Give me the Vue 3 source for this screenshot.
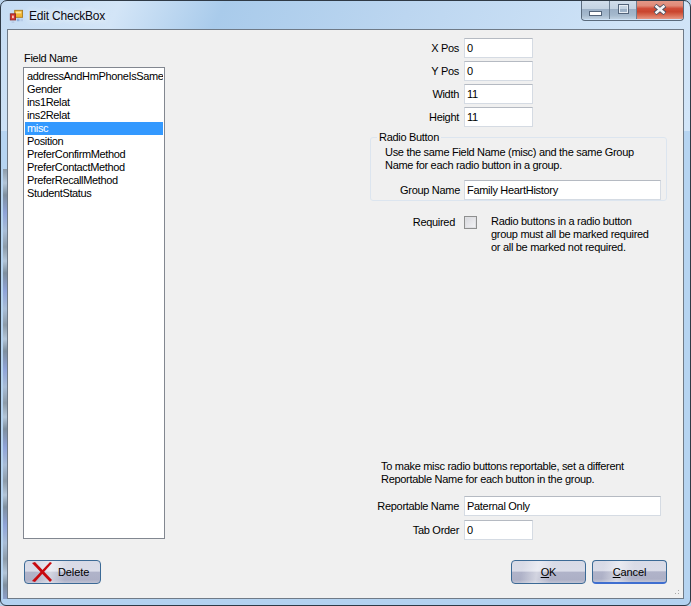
<script setup>
const fields = ['addressAndHmPhoneIsSame','Gender','ins1Relat','ins2Relat','misc','Position','PreferConfirmMethod','PreferContactMethod','PreferRecallMethod','StudentStatus']
const selected = 'misc'
const posRows = [['X Pos','0'],['Y Pos','0'],['Width','11'],['Height','11']]
</script>

<template>
  <div class="window">
    <header class="titlebar">
      <svg class="appicon" width="14" height="14" viewBox="0 0 16 16">
        <rect x="6.5" y="1.5" width="9" height="8" fill="#f2b632" stroke="#a97a1c"/>
        <rect x="8" y="3" width="6" height="2" fill="#fbe6a2"/>
        <rect x="1.5" y="5.5" width="6" height="7" fill="#d8342a" stroke="#8a2a2a"/>
        <rect x="3.5" y="7.5" width="2" height="3" fill="#f7d0c4"/>
        <rect x="9" y="11" width="3" height="3" fill="#8fb0dc"/>
        <rect x="13" y="11" width="3" height="3" fill="#b6cbe6"/>
        <rect x="3" y="14" width="3" height="2" fill="#b6cbe6"/>
      </svg>
      <span class="title">Edit CheckBox</span>
      <div class="controls">
        <div class="ctl ctl-min"><span class="min-glyph"></span></div>
        <div class="ctl ctl-max"><span class="max-glyph"></span></div>
        <div class="ctl ctl-close">
          <svg width="14" height="11" viewBox="0 0 14 11">
            <path d="M2 1.5 L12 9.5 M12 1.5 L2 9.5" stroke="#4a4f60" stroke-width="4.4" />
            <path d="M2.5 1.8 L11.5 9.2 M11.5 1.8 L2.5 9.2" stroke="#f4f4f6" stroke-width="2.6" />
          </svg>
        </div>
      </div>
    </header>

    <main class="client">
      <div class="content">
        <section class="left">
          <div class="field-label">Field Name</div>
          <ul class="listbox">
            <li v-for="f in fields" :key="f" :class="{ sel: f === selected }">{{ f }}</li>
          </ul>
        </section>

        <section class="right">
          <div v-for="r in posRows" :key="r[0]" class="row">
            <label class="lbl">{{ r[0] }}</label>
            <div class="input short">{{ r[1] }}</div>
          </div>

          <fieldset class="group">
            <legend>Radio Button</legend>
            <p class="group-note">Use the same Field Name (misc) and the same Group<br>Name for each radio button in a group.</p>
            <div class="row group-row">
              <label class="lbl">Group Name</label>
              <div class="input group-input">Family HeartHistory</div>
            </div>
          </fieldset>

          <div class="required">
            <label class="req-lbl">Required</label>
            <span class="check"></span>
            <p class="req-note">Radio buttons in a radio button<br>group must all be marked required<br>or all be marked not required.</p>
          </div>

          <p class="report-note">To make misc radio buttons reportable, set a different<br>Reportable Name for each button in the group.</p>
          <div class="row report-row">
            <label class="lbl">Reportable Name</label>
            <div class="input long">Paternal Only</div>
          </div>
          <div class="row">
            <label class="lbl">Tab Order</label>
            <div class="input short">0</div>
          </div>
        </section>
      </div>

      <footer class="footer">
        <button class="btn delete">
          <svg class="x" width="22" height="21" viewBox="0 0 22 21">
            <path d="M1 1 L4 0 L21 18 L19 20 Z" fill="#c8090f"/>
            <path d="M19 0 L21 1 L4 20 L1 19 Z" fill="#c8090f"/>
          </svg>
          <span>Delete</span>
        </button>
        <div class="actions">
          <button class="btn"><span><u>O</u>K</span></button>
          <button class="btn default"><span><u>C</u>ancel</span></button>
        </div>
      </footer>
      <div class="grip"></div>
    </main>
  </div>
</template>

<style>
html, body { margin: 0; padding: 0; background: #b9d3ec; }
</style>

<style scoped>
.window {
  position: relative;
  width: 691px;
  height: 606px;
  box-sizing: border-box;
  display: flex;
  flex-direction: column;
  border-radius: 7px 7px 6px 6px;
  border: 1px solid #2f3a46;
  padding: 0 6px 6px;
  background:
    linear-gradient(#b3d2f0, #b3d2f0) left 0 bottom 0 / 100% 7px no-repeat,
    linear-gradient(115deg, #c5dcf3 0%, #d3e5f7 16%, #a9cbeb 30%, #bcd6f0 55%, #cfe3f7 85%, #d2e5f8 100%) top / 100% 130px no-repeat,
    #b6d4f1;
  font-family: "Liberation Sans", Arial, sans-serif;
  font-size: 11px;
  letter-spacing: -0.3px;
  color: #000;
  overflow: hidden;
}
.window::before {
  content: "";
  position: absolute;
  left: 2px;
  top: 168px;
  bottom: 6px;
  width: 4px;
  background: repeating-linear-gradient(#8d9ba8 0, #b3c5d8 14px, #7f8f9e 26px, #8fa3d8 44px, #a9bdd6 62px, #8d9ba8 78px);
}
.titlebar {
  height: 28px;
  flex: none;
  display: flex;
  align-items: center;
  position: relative;
}
.appicon { margin: 1px 0 0 2px; }
.title {
  margin-left: 6px;
  margin-top: 2px;
  font-size: 12px;
  letter-spacing: -0.2px;
  color: #0b0b12;
  text-shadow: 0 0 6px #eaf3fc, 0 0 6px #eaf3fc;
}
.controls {
  position: absolute;
  top: -1px;
  right: 0;
  display: flex;
  height: 20px;
  border: 1px solid #5a6a7c;
  border-top: none;
  border-radius: 0 0 4px 4px;
  overflow: hidden;
}
.ctl {
  display: flex;
  align-items: center;
  justify-content: center;
  height: 19px;
}
.ctl-min, .ctl-max {
  background: linear-gradient(#d3dfec 0%, #c4d3e2 45%, #9cb0c6 50%, #a5b9cd 80%, #bfd0e0 100%);
  border-right: 1px solid #6d7f92;
  box-sizing: border-box;
}
.ctl-min { width: 28px; padding-top: 7px; }
.min-glyph {
  display: block;
  width: 11px;
  height: 3px;
  background: #fff;
  border: 1px solid #53647a;
}
.ctl-max { width: 27px; padding-bottom: 2px; }
.max-glyph {
  display: block;
  box-sizing: border-box;
  width: 11px;
  height: 10px;
  border: 1px solid #53647a;
  outline: 1px solid #e8eef5;
  outline-offset: -2px;
  position: relative;
}
.ctl-close {
  width: 46px;
  background: linear-gradient(#e49a8a 0%, #e08a78 30%, #cf4c38 45%, #c9452f 62%, #d86a52 80%, #e69684 100%);
}
.client {
  flex: 1;
  position: relative;
  display: flex;
  flex-direction: column;
  background: #f0f0f0;
  border: 1px solid #6f7a87;
  min-height: 0;
}
.content {
  flex: 1;
  display: flex;
  padding: 8px 0 0 15px;
}
.left { width: 142px; flex: none; }
.field-label { margin-top: 13px; margin-left: 1px; line-height: 15px; margin-bottom: 1px; }
.listbox {
  list-style: none;
  margin: 0;
  padding: 2px 1px 0;
  height: 468px;
  box-sizing: content-box;
  width: 138px;
  border: 1px solid #828790;
  background: #fff;
  overflow: hidden;
}
.listbox li {
  height: 13px;
  line-height: 13px;
  padding-left: 2px;
  white-space: nowrap;
  overflow: hidden;
  letter-spacing: -0.36px;
}
.listbox li.sel { background: #3399ff; color: #fff; }
.right {
  margin-left: 205px;
  width: 297px;
  flex: none;
}
.row {
  display: flex;
  align-items: center;
  height: 20px;
  margin-bottom: 3px;
}
.lbl {
  width: 89px;
  flex: none;
  text-align: right;
  margin-right: 5px;
  white-space: nowrap;
}
.input {
  box-sizing: border-box;
  height: 20px;
  line-height: 18px;
  background: #fff;
  border: 1px solid #d5dbe3;
  border-top-color: #b5bac2;
  padding-left: 2px;
  white-space: nowrap;
}
.short { width: 69px; }
.long { width: 197px; }
.group-input { width: 197px; margin-left: -1px; }
.group {
  margin: 1px 0 0;
  padding: 0;
  height: 71px;
  box-sizing: border-box;
  width: 297px;
  border: 1px solid #dce5ef;
  border-radius: 3px;
  min-width: 0;
}
.group legend {
  margin-left: 6px;
  padding: 0 2px;
  line-height: 15px;
}
.group-note {
  margin: 1px 0 0 14px;
  line-height: 13px;
}
.group-row { margin: 8px 0 0; }
.required {
  display: flex;
  margin-top: 15px;
  height: 40px;
}
.req-lbl {
  width: 85px;
  flex: none;
  text-align: right;
  line-height: 13px;
}
.check {
  flex: none;
  box-sizing: border-box;
  margin: 0 0 0 9px;
  width: 13px;
  height: 13px;
  border: 1px solid #8e8f8f;
  background: linear-gradient(135deg, #d6d7dc, #f4f4f6);
  box-shadow: inset 0 0 0 1px #dfe0e3;
}
.req-note {
  margin: -1px 0 0 14px;
  line-height: 13px;
}
.report-note {
  margin: 204px 0 0 11px;
  line-height: 13px;
}
.report-row { margin-top: 10px; margin-bottom: 4px; }
.footer {
  flex: none;
  display: flex;
  justify-content: space-between;
  padding: 0 16px 14px 16px;
}
.actions { display: flex; gap: 6px; }
.btn {
  width: 75px;
  height: 24px;
  box-sizing: border-box;
  padding: 0;
  border: 1px solid #3c6a96;
  border-radius: 4px;
  font: inherit;
  letter-spacing: -0.1px;
  color: #000;
  background:
    linear-gradient(100deg, rgba(255,255,255,0) 15%, rgba(255,255,255,.45) 35%, rgba(255,255,255,0) 55%),
    linear-gradient(#d8dae6 0%, #dadce8 45%, #b0b3c9 52%, #adb0c6 85%, #c0c3d4 100%);
  display: flex;
  align-items: center;
  justify-content: center;
}
.default { border-bottom: 2px solid #3f6fd0; }
.delete {
  width: 77px;
  justify-content: flex-start;
  position: relative;
  padding-left: 33px;
}
.x { position: absolute; left: 6px; top: 1px; }
.grip {
  position: absolute;
  right: 2px;
  bottom: 2px;
  width: 10px;
  height: 10px;
  background-image: radial-gradient(circle, #a8a8a8 0.8px, transparent 1px);
  background-size: 3px 3px;
  clip-path: polygon(100% 0, 100% 100%, 0 100%);
}
</style>
